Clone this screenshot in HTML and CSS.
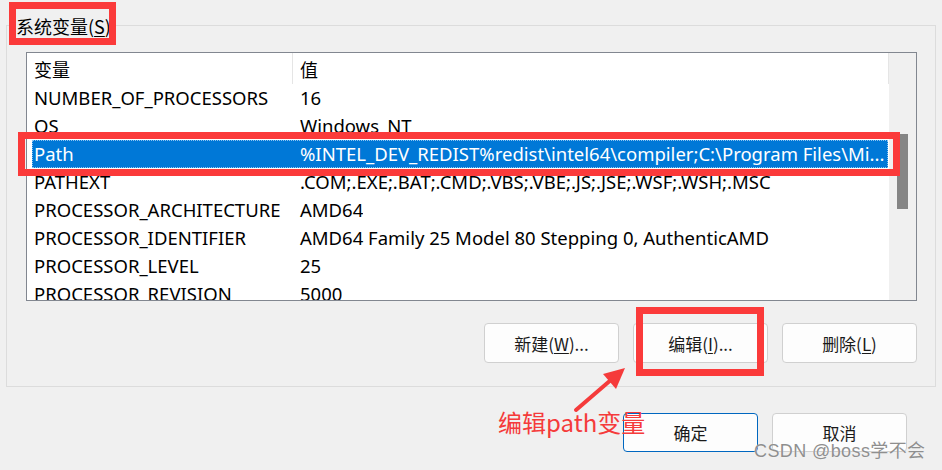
FILE: index.html
```html
<!DOCTYPE html>
<html lang="zh-CN">
<head>
<meta charset="utf-8">
<title>系统变量</title>
<link rel="stylesheet" href="styles.css">
</head>
<body>
<div class="window">
  <div class="group">
    <div class="group-label"><span>系统变量(<u>S</u>)</span></div>
    <div class="listbox">
      <div class="list-main">
        <div class="list-header">
          <div class="col1">变量</div>
          <div class="col2">值</div>
        </div>
        <div class="row"><div class="col1">NUMBER_OF_PROCESSORS</div><div class="col2">16</div></div>
        <div class="row"><div class="col1">OS</div><div class="col2">Windows_NT</div></div>
        <div class="row selected"><div class="col1">Path</div><div class="col2">%INTEL_DEV_REDIST%redist\intel64\compiler;C:\Program Files\Mi...</div></div>
        <div class="row"><div class="col1">PATHEXT</div><div class="col2">.COM;.EXE;.BAT;.CMD;.VBS;.VBE;.JS;.JSE;.WSF;.WSH;.MSC</div></div>
        <div class="row"><div class="col1">PROCESSOR_ARCHITECTURE</div><div class="col2">AMD64</div></div>
        <div class="row"><div class="col1">PROCESSOR_IDENTIFIER</div><div class="col2">AMD64 Family 25 Model 80 Stepping 0, AuthenticAMD</div></div>
        <div class="row"><div class="col1">PROCESSOR_LEVEL</div><div class="col2">25</div></div>
        <div class="row"><div class="col1">PROCESSOR_REVISION</div><div class="col2">5000</div></div>
      </div>
      <div class="scrollbar"><div class="thumb"></div></div>
    </div>
    <div class="btn-row">
      <button class="btn">新建(<u>W</u>)...</button>
      <button class="btn">编辑(<u>I</u>)...</button>
      <button class="btn">删除(<u>L</u>)</button>
    </div>
  </div>
  <div class="dialog-btns">
    <button class="btn default">确定</button>
    <button class="btn">取消</button>
  </div>

  <div class="mark mark-label"></div>
  <div class="mark mark-row"></div>
  <div class="mark mark-edit"></div>
  <svg class="arrow" width="942" height="470" viewBox="0 0 942 470">
    <line x1="576" y1="410" x2="612" y2="379" stroke="#f53b3b" stroke-width="4" stroke-linecap="round"/>
    <polygon points="625,368 603,374 616,389" fill="#f53b3b"/>
  </svg>
  <div class="note">编辑path变量</div>
  <div class="watermark">CSDN @boss学不会</div>
</div>
</body>
</html>
```

FILE: styles.css
```css
* { box-sizing: border-box; }
html, body {
  margin: 0;
  padding: 0;
  background: #f0f0f0;
}
body {
  font-family: "Noto Sans", "Noto Sans CJK SC", sans-serif;
  color: #000;
}
.window {
  position: relative;
  width: 942px;
  height: 470px;
  overflow: hidden;
  background: #f0f0f0;
  padding-top: 25px;
}
.group {
  position: relative;
  margin-left: 6px;
  width: 930px;
  height: 362px;
  border: 1px solid #dcdcdc;
  padding: 26px 17px 0 19px;
}
.group-label {
  position: absolute;
  left: 8px;
  top: -14px;
  height: 28px;
  line-height: 28px;
  font-family: "Noto Sans CJK SC", sans-serif;
  font-size: 18px;
  background: #f0f0f0;
  padding: 0 1px;
  white-space: nowrap;
}
.group-label u { text-underline-offset: 2px; }
.listbox {
  display: flex;
  width: 891px;
  height: 249px;
  border: 1px solid #828790;
  background: #fff;
  overflow: hidden;
}
.list-main {
  width: 862px;
  font-size: 18.5px;
}
.list-header {
  display: flex;
  height: 31px;
  align-items: center;
  font-family: "Noto Sans CJK SC", sans-serif;
  font-size: 18px;
}
.list-header .col1 {
  border-right: 1px solid #e5e5e5;
  height: 31px;
  display: flex;
  align-items: center;
}
.list-header .col2 {
  flex: 1;
  border-right: 1px solid #e5e5e5;
  height: 31px;
  display: flex;
  align-items: center;
}
.col1 {
  width: 266px;
  padding-left: 7px;
  white-space: nowrap;
}
.col2 {
  padding-left: 7px;
  white-space: nowrap;
  overflow: hidden;
}
.row {
  display: flex;
  height: 28px;
  line-height: 28px;
  align-items: center;
}
.row.selected {
  background: #0078d7;
  color: #fff;
  margin-left: 5px;
  margin-right: 1px;
  outline: 1px dotted #8cc4f2;
  outline-offset: -1px;
}
.row.selected .col1 {
  width: 261px;
  padding-left: 2px;
}
.scrollbar {
  width: 27px;
  background: #f0f0f0;
  padding-top: 81px;
  padding-left: 8px;
}
.thumb {
  width: 11px;
  height: 75px;
  background: #858585;
}
.btn-row {
  display: flex;
  justify-content: flex-end;
  gap: 14px;
  margin-top: 22px;
  padding-right: 1px;
}
.btn {
  width: 135px;
  height: 40px;
  border: 1px solid #d0d0d0;
  border-radius: 4px;
  background: #fdfdfd;
  font-family: "Noto Sans CJK SC", sans-serif;
  font-size: 17px;
  color: #1a1a1a;
  padding: 0;
}
.btn u { text-underline-offset: 2px; }
.btn.default {
  border-color: #0067c0;
}
.dialog-btns {
  display: flex;
  justify-content: flex-end;
  gap: 14px;
  margin-top: 26px;
  padding-right: 35px;
}
.dialog-btns .btn { height: 39px; }
.mark {
  position: absolute;
  border: 7px solid #fb3a3a;
}
.mark-label { left: 9px; top: 2px; width: 107px; height: 43px; }
.mark-row { left: 18px; top: 132px; width: 882px; height: 44px; }
.mark-edit { left: 636px; top: 307px; width: 128px; height: 69px; }
.arrow {
  position: absolute;
  left: 0;
  top: 0;
}
.note {
  position: absolute;
  left: 498px;
  top: 405px;
  font-family: "Noto Sans CJK SC", sans-serif;
  font-size: 24px;
  line-height: 34px;
  color: #f53b3b;
}
.watermark {
  position: absolute;
  left: 754px;
  top: 439px;
  font-family: "Liberation Sans", "Noto Sans CJK SC", sans-serif;
  font-size: 18px;
  line-height: 24px;
  letter-spacing: 0.4px;
  color: #8f8f8f;
  text-shadow: 0 0 1px #fff;
}
```
